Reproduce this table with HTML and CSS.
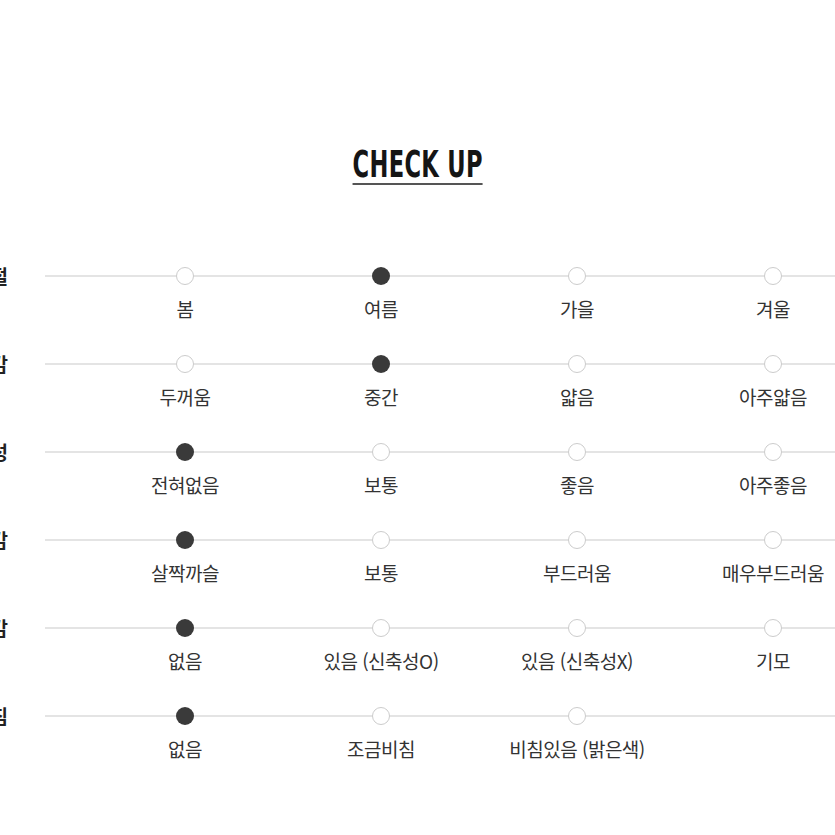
FILE: index.html
```html
<!DOCTYPE html>
<html lang="ko">
<head>
<meta charset="utf-8">
<title>CHECK UP</title>
<link rel="stylesheet" href="styles.css">
</head>
<body>
<div class="page">
  <header class="head"><h1 class="title">CHECK UP</h1></header>
  <div class="rows">
    <div class="row">
      <div class="name">계절</div>
      <div class="track">
        <div class="opt"><span class="dot"></span><span class="txt">봄</span></div>
        <div class="opt"><span class="dot on"></span><span class="txt">여름</span></div>
        <div class="opt"><span class="dot"></span><span class="txt">가을</span></div>
        <div class="opt"><span class="dot"></span><span class="txt">겨울</span></div>
      </div>
    </div>
    <div class="row">
      <div class="name">두께감</div>
      <div class="track">
        <div class="opt"><span class="dot"></span><span class="txt">두꺼움</span></div>
        <div class="opt"><span class="dot on"></span><span class="txt">중간</span></div>
        <div class="opt"><span class="dot"></span><span class="txt">얇음</span></div>
        <div class="opt"><span class="dot"></span><span class="txt">아주얇음</span></div>
      </div>
    </div>
    <div class="row">
      <div class="name">신축성</div>
      <div class="track">
        <div class="opt"><span class="dot on"></span><span class="txt">전혀없음</span></div>
        <div class="opt"><span class="dot"></span><span class="txt">보통</span></div>
        <div class="opt"><span class="dot"></span><span class="txt">좋음</span></div>
        <div class="opt"><span class="dot"></span><span class="txt">아주좋음</span></div>
      </div>
    </div>
    <div class="row">
      <div class="name">촉감</div>
      <div class="track">
        <div class="opt"><span class="dot on"></span><span class="txt">살짝까슬</span></div>
        <div class="opt"><span class="dot"></span><span class="txt">보통</span></div>
        <div class="opt"><span class="dot"></span><span class="txt">부드러움</span></div>
        <div class="opt"><span class="dot"></span><span class="txt">매우부드러움</span></div>
      </div>
    </div>
    <div class="row">
      <div class="name">안감</div>
      <div class="track">
        <div class="opt"><span class="dot on"></span><span class="txt">없음</span></div>
        <div class="opt"><span class="dot"></span><span class="txt">있음 (신축성O)</span></div>
        <div class="opt"><span class="dot"></span><span class="txt">있음 (신축성X)</span></div>
        <div class="opt"><span class="dot"></span><span class="txt">기모</span></div>
      </div>
    </div>
    <div class="row">
      <div class="name">비침</div>
      <div class="track">
        <div class="opt"><span class="dot on"></span><span class="txt">없음</span></div>
        <div class="opt"><span class="dot"></span><span class="txt">조금비침</span></div>
        <div class="opt"><span class="dot"></span><span class="txt">비침있음 (밝은색)</span></div>
      </div>
    </div>
  </div>
</div>
</body>
</html>
```

FILE: styles.css
```css
html, body {
  margin: 0;
  padding: 0;
  background: #ffffff;
}

.page {
  width: 835px;
  height: 835px;
  overflow: hidden;
  padding-top: 146px;
  box-sizing: border-box;
  font-family: "Noto Sans CJK KR", "Noto Sans", sans-serif;
  color: #333333;
}

.head {
  text-align: center;
}

.title {
  display: inline-block;
  margin: 0;
  font-family: "Liberation Sans Narrow", "DejaVu Sans Condensed", "Liberation Sans", sans-serif;
  font-weight: 700;
  font-size: 38px;
  line-height: 37px;
  color: #151515;
  border-bottom: 2px solid #555555;
  transform: scaleX(0.66);
  letter-spacing: 0.5px;
}

.rows {
  margin-top: 82px;
  display: flex;
  flex-direction: column;
}

.row {
  display: flex;
  height: 88px;
  margin-left: -112px;
}

.name {
  flex: none;
  width: 120px;
  text-align: right;
  font-size: 19px;
  font-weight: 700;
  line-height: 18px;
  color: #222222;
  margin-right: 37px;
}

.track {
  flex: none;
  width: 1000px;
  padding-left: 42px;
  display: grid;
  grid-template-columns: repeat(5, 196px);
  align-content: start;
  background: linear-gradient(#e4e4e4, #e4e4e4) no-repeat 0 8px / 100% 2px;
}

.opt {
  display: flex;
  flex-direction: column;
  align-items: center;
}

.dot {
  width: 18px;
  height: 18px;
  box-sizing: border-box;
  border-radius: 50%;
  border: 1.5px solid #cccccc;
  background: #ffffff;
}

.dot.on {
  border: none;
  background: #3a3a3a;
}

.txt {
  margin-top: 11px;
  font-size: 19px;
  line-height: 26px;
  color: #333333;
  white-space: nowrap;
  letter-spacing: -0.5px;
}
```
